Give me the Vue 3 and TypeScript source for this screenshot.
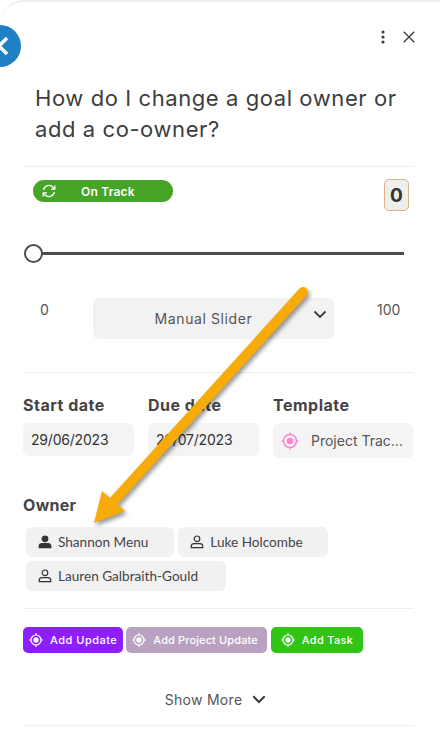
<script setup lang="ts">
const dates = [
  { label: 'Start date', value: '29/06/2023' },
  { label: 'Due date', value: '29/07/2023' },
]

const owners = [
  { name: 'Shannon Menu', primary: true },
  { name: 'Luke Holcombe', primary: false },
  { name: 'Lauren Galbraith-Gould', primary: false },
]

const actions = [
  { label: 'Add Update', color: 'purple' },
  { label: 'Add Project Update', color: 'mauve' },
  { label: 'Add Task', color: 'green' },
]
</script>

<template>
  <div class="panel">
    <button class="back" aria-label="Back">
      <svg width="14" height="22" viewBox="0 0 14 22"><path d="M11 3 3 11l8 8" fill="none" stroke="#fff" stroke-width="3.500" /></svg>
    </button>

    <header class="top-icons">
      <svg width="4" height="14" viewBox="0 0 4 14" fill="#3c3c3c">
        <circle cx="2" cy="2" r="1.600" />
        <circle cx="2" cy="7" r="1.600" />
        <circle cx="2" cy="12" r="1.600" />
      </svg>
      <svg width="12" height="12" viewBox="0 0 12 12"><path d="M.7.7l10.600 10.600M11.300.7.7 11.300" stroke="#3c3c3c" stroke-width="1.300" fill="none" /></svg>
    </header>

    <h1 class="title">How do I change a goal owner or add a co-owner?</h1>

    <section class="status-row">
      <div class="pill">
        <svg width="14" height="14" viewBox="0 0 14 14" fill="none" stroke="#fff" stroke-width="1.300">
          <path d="M1.600 6a5.500 5.500 0 0 1 9.600-2.600L12.600 5M12.400 8a5.500 5.500 0 0 1-9.600 2.600L1.400 9" />
          <path d="M12.800 1.400V5.200H9M1.200 12.600V8.800H5" />
        </svg>
        <span>On Track</span>
      </div>
      <div class="score">0</div>
    </section>

    <div class="slider">
      <span class="thumb"></span>
    </div>

    <section class="range-row">
      <span class="min">0</span>
      <div class="select">
        <span>Manual Slider</span>
        <svg width="14" height="9" viewBox="0 0 14 9"><path d="M1.500 1.500 7 7l5.500-5.500" fill="none" stroke="#3c3c3c" stroke-width="1.800" /></svg>
      </div>
      <span class="max">100</span>
    </section>

    <section class="fields">
      <div v-for="d in dates" :key="d.label" class="field">
        <label>{{ d.label }}</label>
        <div class="date-input">{{ d.value }}</div>
      </div>
      <div class="field field-template">
        <label>Template</label>
        <div class="template-input">
          <svg width="18" height="18" viewBox="0 0 18 18" fill="none" stroke="#ff85cf">
            <circle cx="9" cy="9" r="6.500" stroke-width="1.500" />
            <circle cx="9" cy="9" r="3.300" fill="#ff85cf" stroke="none" />
            <path d="M9 .5v2.500M9 15v2.500M.5 9H3M15 9h2.500" stroke-width="1.500" />
          </svg>
          <span>Project Trac...</span>
        </div>
      </div>
    </section>

    <section class="owner">
      <h2>Owner</h2>
      <div class="chips">
        <div v-for="o in owners" :key="o.name" class="chip">
          <svg width="14" height="14" viewBox="0 0 14 14" :fill="o.primary ? '#333' : 'none'" stroke="#333" stroke-width="1.200">
            <circle cx="7" cy="3.800" r="2.800" />
            <path d="M1.200 12.700v-1.200c0-1.600 1.500-2.800 3-2.800h5.600c1.500 0 3 1.200 3 2.800v1.200z" />
          </svg>
          <span>{{ o.name }}</span>
        </div>
      </div>
    </section>

    <section class="actions">
      <button v-for="a in actions" :key="a.label" class="action" :class="a.color">
        <svg width="14" height="14" viewBox="0 0 14 14" fill="none" stroke="#fff">
          <circle cx="7" cy="7" r="5" stroke-width="1.200" />
          <circle cx="7" cy="7" r="2.700" fill="#fff" stroke="none" />
          <path d="M7 0v2M7 12v2M0 7h2M12 7h2" stroke-width="1.200" />
        </svg>
        <span>{{ a.label }}</span>
      </button>
    </section>

    <button class="show-more">
      <span>Show More</span>
      <svg width="14" height="9" viewBox="0 0 14 9"><path d="M1.300 1.300 7 7l5.700-5.700" fill="none" stroke="#3c3c3c" stroke-width="2" /></svg>
    </button>

    <svg class="arrow" width="440" height="753" viewBox="0 0 440 753">
      <path d="M303 292 112 503" stroke="#f7ab08" stroke-width="10" stroke-linecap="round" fill="none" />
      <path d="M94 523 102 491 125 511z" fill="#f7ab08" />
    </svg>
  </div>
</template>

<style scoped>
.panel {
  position: relative;
  width: 440px;
  height: 753px;
  box-sizing: border-box;
  padding: 0 26px 0 23px;
  overflow: hidden;
  font-family: Inter, "Open Sans", sans-serif;
  color: #444;
  background: #fff;
  border-top: 2px solid #eee;
  border-top-left-radius: 24px;
}

.back {
  position: absolute;
  left: -21px;
  top: 23px;
  width: 42px;
  height: 42px;
  padding: 0 0 0 17px;
  border: 0;
  border-radius: 50%;
  background: #1f80c4;
  display: flex;
  align-items: center;
  justify-content: flex-start;
}

.top-icons {
  display: flex;
  justify-content: flex-end;
  align-items: center;
  gap: 18px;
  height: 14px;
  margin-right: -1px;
  padding-top: 28px;
}

.title {
  margin: 0;
  padding: 39px 12px 21px;
  font-size: 22px;
  line-height: 31px;
  font-weight: 400;
  letter-spacing: 0.58px;
  color: #3d3d3d;
  border-bottom: 1px solid #eee;
}

.status-row {
  display: flex;
  justify-content: space-between;
  align-items: flex-start;
  padding: 12px 5px 0 10px;
}

.pill {
  width: 140px;
  height: 22px;
  margin-top: 1px;
  border-radius: 11px;
  background: #46a426;
  color: #fff;
  font-size: 12px;
  font-weight: 600;
  letter-spacing: 0.2px;
  display: flex;
  align-items: center;
  box-sizing: border-box;
  padding-left: 9px;
}

.pill span {
  margin-left: 25px;
}

.score {
  width: 25px;
  height: 32px;
  box-sizing: border-box;
  border: 1px solid #d9b47f;
  border-radius: 5px;
  background: #eee;
  font-size: 19px;
  font-weight: 700;
  color: #333;
  display: flex;
  align-items: center;
  justify-content: center;
}

.slider {
  position: relative;
  height: 3px;
  margin: 41px 10px 0 10px;
  background: #4d4d4d;
}

.thumb {
  position: absolute;
  left: -9px;
  top: -8px;
  width: 19px;
  height: 19px;
  box-sizing: border-box;
  border: 2px solid #4d4d4d;
  border-radius: 50%;
  background: #fff;
}

.range-row {
  display: grid;
  grid-template-columns: 70px 241px 1fr;
  align-items: start;
  margin-top: 43px;
  padding-bottom: 33px;
  border-bottom: 1px solid #eee;
  font-size: 14px;
  color: #555;
}

.min {
  padding: 3px 0 0 17px;
}

.max {
  padding: 3px 0 0 43px;
}

.select {
  position: relative;
  height: 41px;
  border-radius: 6px;
  background: #f2f2f2;
  display: flex;
  align-items: center;
  justify-content: center;
  padding-right: 20px;
  box-sizing: border-box;
  font-size: 14px;
  letter-spacing: 0.6px;
  color: #555;
}

.select svg {
  position: absolute;
  right: 7px;
  top: 12px;
}

.fields {
  display: flex;
  gap: 14px;
  margin-top: 23px;
}

.field {
  width: 111px;
}

.field-template {
  width: 140px;
}

.field label {
  display: block;
  height: 18px;
  margin-bottom: 9px;
  font-size: 16px;
  line-height: 18px;
  font-weight: 700;
  letter-spacing: 0.5px;
  color: #444;
}

.date-input {
  height: 33px;
  padding-left: 8px;
  border-radius: 6px;
  background: #f4f4f4;
  font-size: 14px;
  line-height: 33px;
  letter-spacing: -0.2px;
  color: #333;
}

.template-input {
  height: 35px;
  padding-left: 8px;
  border-radius: 6px;
  background: #f4f4f4;
  display: flex;
  align-items: center;
  gap: 12px;
  font-size: 14px;
  color: #555;
  white-space: nowrap;
}

.owner {
  margin-top: 36px;
  padding-bottom: 17px;
  border-bottom: 1px solid #eee;
}

.owner h2 {
  margin: 0 0 11px;
  font-size: 16px;
  line-height: 22px;
  font-weight: 700;
  letter-spacing: 0.3px;
  color: #444;
}

.chips {
  display: flex;
  flex-wrap: wrap;
  gap: 4px;
  margin-left: 3px;
}

.chip {
  height: 30px;
  padding: 0 26px 0 12px;
  border-radius: 6px;
  background: #f1f1f1;
  display: flex;
  align-items: center;
  gap: 6px;
  font-family: Lato, "Open Sans", sans-serif;
  font-size: 13.600px;
  color: #444;
}

.chip:nth-child(2) {
  padding-right: 25px;
}

.chip:last-child {
  padding-right: 28px;
}

.actions {
  display: flex;
  gap: 3px;
  margin-top: 18px;
}

.action {
  height: 26px;
  padding: 0 6px;
  border: 0;
  border-radius: 5px;
  display: flex;
  align-items: center;
  gap: 7px;
  color: #fff;
  font-family: inherit;
  font-size: 11px;
  font-weight: 500;
}

.purple {
  letter-spacing: 0.5px;
  background: #8d1fff;
}

.mauve {
  padding-right: 9px;
  letter-spacing: 0.12px;
  background: #b9a1c1;
}

.green {
  margin-left: 1px;
  padding: 0 10px;
  letter-spacing: 0.3px;
  background: #31c414;
}

.show-more {
  display: flex;
  align-items: center;
  justify-content: center;
  gap: 10px;
  width: 100%;
  height: 73px;
  padding: 20px 6px 0 0;
  border: 0;
  border-bottom: 1px solid #eee;
  background: none;
  font-family: inherit;
  font-size: 14px;
  letter-spacing: 0.3px;
  color: #555;
}

.arrow {
  position: absolute;
  left: 0;
  top: -2px;
  pointer-events: none;
  filter: drop-shadow(2px 3px 2px rgba(0, 0, 0, 0.4));
}
</style>
